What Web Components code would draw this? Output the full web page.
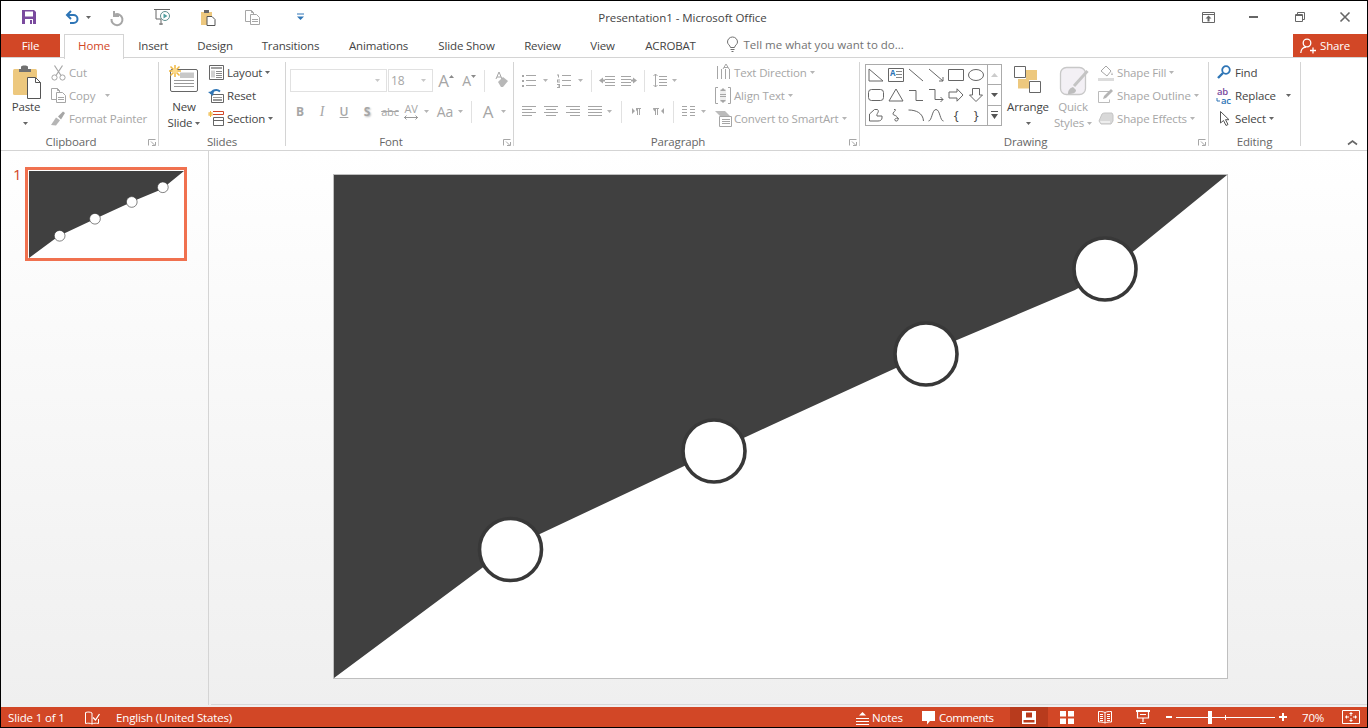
<!DOCTYPE html>
<html lang="en"><head><meta charset="utf-8"><title>Presentation1 - Microsoft Office</title>
<style>
html,body{margin:0;padding:0;background:#000}
body{font:11.5px/16px "Open Sans","Liberation Sans",sans-serif;color:#444}
</style></head>
<body>
<pp-app>
  <pp-titlebar>
    <pp-ico slot="qat" name="save" style="margin-left:20px"></pp-ico>
    <pp-ico slot="qat" name="undo" style="margin-left:27px"></pp-ico>
    <pp-ico slot="qat" name="caret" style="margin-left:7px"></pp-ico>
    <pp-ico slot="qat" name="redo" style="margin-left:19px"></pp-ico>
    <pp-ico slot="qat" name="present" style="margin-left:30px"></pp-ico>
    <pp-ico slot="qat" name="pastesm" style="margin-left:30px"></pp-ico>
    <pp-ico slot="qat" name="copy" style="margin-left:29px"></pp-ico>
    <pp-ico slot="qat" name="qatmore" style="margin-left:37px"></pp-ico>
    <span slot="title">Presentation1 - Microsoft Office</span>
    <pp-ico slot="win" name="ribopt" style="margin-right:34px"></pp-ico>
    <pp-ico slot="win" name="min" style="margin-right:36px"></pp-ico>
    <pp-ico slot="win" name="restore" style="margin-right:35px"></pp-ico>
    <pp-ico slot="win" name="close" style="margin-right:17px"></pp-ico>
  </pp-titlebar>
  <pp-tabs>
    <pp-tab kind="file" style="width:59px">File</pp-tab>
    <pp-tab kind="active" style="width:60px;margin-left:4px">Home</pp-tab>
    <pp-tab style="width:58.5px">Insert</pp-tab>
    <pp-tab style="width:65px">Design</pp-tab>
    <pp-tab style="width:86px">Transitions</pp-tab>
    <pp-tab style="width:90px">Animations</pp-tab>
    <pp-tab style="width:86px">Slide Show</pp-tab>
    <pp-tab style="width:66px">Review</pp-tab>
    <pp-tab style="width:54px">View</pp-tab>
    <pp-tab style="width:82px">ACROBAT</pp-tab>
    <pp-tell><pp-ico slot="icon" name="bulb"></pp-ico>Tell me what you want to do...</pp-tell>
    <pp-share><pp-ico slot="icon" name="share"></pp-ico>Share</pp-share>
  </pp-tabs>
  <pp-ribbon>
    <pp-group label="Clipboard" launcher style="width:158px">
      <pp-large style="width:48px;margin-left:1px">
        <pp-ico slot="icon" name="paste" style="margin-left:3px"></pp-ico>Paste<br><pp-ico name="caret"></pp-ico>
      </pp-large>
      <pp-stack>
        <pp-small disabled><pp-ico slot="icon" name="cut"></pp-ico>Cut</pp-small>
        <pp-small disabled><pp-ico slot="icon" name="copy"></pp-ico>Copy<pp-ico name="caretd" style="margin-left:10px"></pp-ico></pp-small>
        <pp-small disabled><pp-ico slot="icon" name="painter"></pp-ico>Format Painter</pp-small>
      </pp-stack>
    </pp-group>
    <pp-group label="Slides" style="width:127px">
      <pp-large style="width:46px;margin-left:2px">
        <pp-ico slot="icon" name="newslide" style="margin-right:2px"></pp-ico>New<br>Slide<pp-ico name="caret" style="margin-left:3px"></pp-ico>
      </pp-large>
      <pp-stack style="margin-left:1px">
        <pp-small><pp-ico slot="icon" name="layout"></pp-ico>Layout<pp-ico name="caret" style="margin-left:3px"></pp-ico></pp-small>
        <pp-small><pp-ico slot="icon" name="reset"></pp-ico>Reset</pp-small>
        <pp-small><pp-ico slot="icon" name="section"></pp-ico>Section<pp-ico name="caret" style="margin-left:3px"></pp-ico></pp-small>
      </pp-stack>
    </pp-group>
    <pp-group label="Font" launcher style="width:228px">
      <pp-tools>
        <pp-toolrow>
          <pp-field style="width:97px;margin-left:4px"></pp-field>
          <pp-field style="width:45px;margin-left:1px;font-size:12px">18</pp-field>
          <pp-tool style="width:14px;margin-left:6px;font-size:17px">A<pp-ico name="up" style="margin:-8px 0 0 0"></pp-ico></pp-tool>
          <pp-tool style="width:14px;margin-left:9px;font-size:14px">A<pp-ico name="dn" style="margin:-8px 0 0 0"></pp-ico></pp-tool>
          <pp-sep style="margin-left:8px"></pp-sep>
          <pp-ico name="eraser" style="margin-left:9px"></pp-ico>
        </pp-toolrow>
        <pp-toolrow>
          <pp-tool style="width:22px;margin-left:3px;font-weight:700;font-size:12px">B</pp-tool>
          <pp-tool style="width:22px;font-style:italic;font-family:'Liberation Serif',serif;font-size:14px">I</pp-tool>
          <pp-tool style="width:22px;text-decoration:underline;font-weight:600;font-size:12px">U</pp-tool>
          <pp-tool style="width:22px;margin-left:1px;font-weight:700;font-size:12px;text-shadow:1px 1px 2px #bbb">S</pp-tool>
          <pp-tool style="width:22px;margin-left:1px;text-decoration:line-through;font-size:11px">abc</pp-tool>
          <pp-tool av style="width:16px;margin-left:2px;font-size:11px"><pp-ico name="avarrow" style="position:absolute;left:0;bottom:3px"></pp-ico><span style="margin-top:-6px">AV</span></pp-tool>
          <pp-ico name="caretd" style="margin-left:5px"></pp-ico>
          <pp-tool style="width:16px;margin-left:8px;font-size:14px">Aa</pp-tool>
          <pp-ico name="caretd" style="margin-left:5px"></pp-ico>
          <pp-sep style="margin-left:8px"></pp-sep>
          <pp-tool style="width:14px;margin-left:9px;font-size:17px">A</pp-tool>
          <pp-ico name="caretd" style="margin-left:6px"></pp-ico>
        </pp-toolrow>
      </pp-tools>
    </pp-group>
    <pp-group label="Paragraph" launcher style="width:346px">
      <pp-tools style="width:200px">
        <pp-toolrow>
          <pp-ico name="bullets" style="margin-left:8px"></pp-ico>
          <pp-ico name="caretd" style="margin-left:7px"></pp-ico>
          <pp-ico name="numbers" style="margin-left:9px"></pp-ico>
          <pp-ico name="caretd" style="margin-left:7px"></pp-ico>
          <pp-sep style="margin-left:8px"></pp-sep>
          <pp-ico name="outdent" style="margin-left:7px"></pp-ico>
          <pp-ico name="indent" style="margin-left:6px"></pp-ico>
          <pp-sep style="margin-left:7px"></pp-sep>
          <pp-ico name="spacing" style="margin-left:8px"></pp-ico>
          <pp-ico name="caretd" style="margin-left:5px"></pp-ico>
        </pp-toolrow>
        <pp-toolrow>
          <pp-ico name="aleft" style="margin-left:8px"></pp-ico>
          <pp-ico name="acenter" style="margin-left:8px"></pp-ico>
          <pp-ico name="aright" style="margin-left:8px"></pp-ico>
          <pp-ico name="ajust" style="margin-left:8px"></pp-ico>
          <pp-ico name="caretd" style="margin-left:5px"></pp-ico>
          <pp-sep style="margin-left:9px"></pp-sep>
          <pp-ico name="ltr" style="margin-left:10px"></pp-ico>
          <pp-ico name="rtl" style="margin-left:12px"></pp-ico>
          <pp-sep style="margin-left:9px"></pp-sep>
          <pp-ico name="cols" style="margin-left:8px"></pp-ico>
          <pp-ico name="caretd" style="margin-left:6px"></pp-ico>
        </pp-toolrow>
      </pp-tools>
      <pp-stack style="margin-left:1px">
        <pp-small disabled><pp-ico slot="icon" name="textdir"></pp-ico>Text Direction<pp-ico name="caretd" style="margin-left:3px"></pp-ico></pp-small>
        <pp-small disabled><pp-ico slot="icon" name="aligntext"></pp-ico>Align Text<pp-ico name="caretd" style="margin-left:3px"></pp-ico></pp-small>
        <pp-small disabled><pp-ico slot="icon" name="smartart"></pp-ico>Convert to SmartArt<pp-ico name="caretd" style="margin-left:3px"></pp-ico></pp-small>
      </pp-stack>
    </pp-group>
    <pp-group label="Drawing" launcher style="width:349px">
      <pp-gallery style="margin-left:5px">
        <pp-ico name="s1"></pp-ico><pp-ico name="s2"></pp-ico><pp-ico name="s3"></pp-ico><pp-ico name="s4"></pp-ico><pp-ico name="s5"></pp-ico><pp-ico name="s6"></pp-ico>
        <pp-ico name="s7"></pp-ico><pp-ico name="s8"></pp-ico><pp-ico name="s9"></pp-ico><pp-ico name="s10"></pp-ico><pp-ico name="s11"></pp-ico><pp-ico name="s12"></pp-ico>
        <pp-ico name="s13"></pp-ico><pp-ico name="s14"></pp-ico><pp-ico name="s15"></pp-ico><pp-ico name="s16"></pp-ico><span>{</span><span>}</span>
      </pp-gallery>
      <pp-large style="width:48px;margin-left:2px">
        <pp-ico slot="icon" name="arrange" style="margin-top:1px"></pp-ico>Arrange<br><pp-ico name="caret"></pp-ico>
      </pp-large>
      <pp-large disabled style="width:42px">
        <pp-ico slot="icon" name="quick" style="margin:2px 0 0 4px"></pp-ico>Quick<br>Styles<pp-ico name="caretd" style="margin-left:3px"></pp-ico>
      </pp-large>
      <pp-stack style="margin-left:4px">
        <pp-small disabled><pp-ico slot="icon" name="fill"></pp-ico>Shape Fill<pp-ico name="caretd" style="margin-left:3px"></pp-ico></pp-small>
        <pp-small disabled><pp-ico slot="icon" name="outline"></pp-ico>Shape Outline<pp-ico name="caretd" style="margin-left:3px"></pp-ico></pp-small>
        <pp-small disabled><pp-ico slot="icon" name="effects"></pp-ico>Shape Effects<pp-ico name="caretd" style="margin-left:3px"></pp-ico></pp-small>
      </pp-stack>
    </pp-group>
    <pp-group label="Editing" style="width:92px">
      <pp-stack style="margin-left:7px">
        <pp-small><pp-ico slot="icon" name="find"></pp-ico>Find</pp-small>
        <pp-small><pp-ico slot="icon" name="replace"></pp-ico>Replace<pp-ico name="caret" style="margin-left:10px"></pp-ico></pp-small>
        <pp-small><pp-ico slot="icon" name="select"></pp-ico>Select<pp-ico name="caret" style="margin-left:3px"></pp-ico></pp-small>
      </pp-stack>
    </pp-group>
    <pp-ico slot="end" name="chev"></pp-ico>
  </pp-ribbon>
  <pp-main>
    <pp-thumbs slot="pane"><pp-slide thumb></pp-slide></pp-thumbs>
    <pp-slide></pp-slide>
  </pp-main>
  <pp-status>
    <pp-sitem slot="left" style="width:77px;margin-left:7px">Slide 1 of 1</pp-sitem>
    <pp-sitem slot="left" style="width:31px"><pp-ico name="spell"></pp-ico></pp-sitem>
    <pp-sitem slot="left">English (United States)</pp-sitem>
    <pp-sitem style="width:66px"><pp-ico name="notes" style="margin-right:3px"></pp-ico>Notes</pp-sitem>
    <pp-sitem style="width:88px;letter-spacing:-.5px"><pp-ico name="comment" style="margin-right:4px"></pp-ico>Comments</pp-sitem>
    <pp-sitem view active><pp-ico name="vnormal"></pp-ico></pp-sitem>
    <pp-sitem view><pp-ico name="vsorter"></pp-ico></pp-sitem>
    <pp-sitem view><pp-ico name="vread"></pp-ico></pp-sitem>
    <pp-sitem view><pp-ico name="vshow"></pp-ico></pp-sitem>
    <pp-zoomer></pp-zoomer>
    <pp-sitem style="width:40px;margin-left:15px">70%</pp-sitem>
    <pp-ico name="fit" style="margin-right:7px"></pp-ico>
  </pp-status>
</pp-app>
<script>
const G='#a6a6a6',D='#666',B='#2e75b6',T='#edc87e',W='#fff';
const ln=(d,c=G,w=1)=>`<path d="${d}" fill="none" stroke="${c}" stroke-width="${w}"/>`;
const fl=(d,c=G)=>`<path d="${d}" fill="${c}"/>`;
const hl=(x,ys,len,c=G)=>ys.map(y=>`<path d="M${x} ${y}.5h${len}" stroke="${c}"/>`).join('');
const I={
save:[16,16,fl('M1 1h12l2 2v12H1z','#7a4a9e')+fl('M4 2.5h8v5H4zM4 10h8v5H4z',W)+fl('M9 11h2v4H9z','#7a4a9e')],
undo:[15,15,ln('M3 5h6.5a4 4 0 0 1 0 8H6',B,2)+ln('M7 1L3 5l4 4',B,2)],
redo:[14,15,ln('M4 1v5h5',G,2)+ln('M5 4.500A5.500 5.500 0 1 1 1.500 9',G,2)],
caret:[5,3,fl('M0 0h5L2.5 3z',D)],
caretd:[5,3,fl('M0 0h5L2.5 3z','#b5b5b5')],
up:[5,3,fl('M0 3h5L2.5 0z','#8a8a8a')],
dn:[5,3,fl('M0 0h5L2.5 3z','#8a8a8a')],
present:[17,18,ln('M0 1.5h16',D)+ln('M2 2v9h5M9 16H5m2-5v6',D)+`<circle cx="11" cy="8" r="4.5" fill="#fff" stroke="#5e8f8f"/>`+fl('M9.5 5.5l4 2.5-4 2.5z','#4f9f9f')],
pastesm:[15,17,fl('M0 3h11v13H0z',T)+fl('M3 1h5v3H3z',D)+`<path d="M6 7.5h5l3 3v6H6z" fill="#fff" stroke="#555"/>`],
qatmore:[7,8,fl('M0 0.5h7v1H0z',B)+fl('M0 3.5h7L3.5 7z',B)],
copy:[15,15,ln('M.5 .5h6l2 2v9h-8zM6.5 .5v2h2',G)+`<path d="M5.5 4.5h6l3 3v7h-9z" fill="#fff" stroke="${G}"/>`+ln('M7 9.5h6M7 11.5h6',G)],
ribopt:[13,11,ln('M.5 .5h12v10H.5zM.5 2.5h12',D)+fl('M6.5 3.5L9.5 6.5H7.5v3h-2v-3H3.5z',D)],
min:[10,2,fl('M0 0h9v2H0z',D)],
restore:[10,10,ln('M2.5 2.5v-2h7v7h-2M.5 2.5h7v7h-7zM.5 3.5h7',D)],
close:[10,10,ln('M.5 .5l9 9m0-9l-9 9',D,1.6)],
bulb:[11,15,ln('M3.5 10.5C3 8 .5 7.5.5 5a5 5 0 0 1 10 0c0 2.500-2.500 3-3 5.500zM3.500 12.500h4M4.500 14.500h2','#707070')],
share:[16,16,`<circle cx="7" cy="5" r="3.800" fill="none" stroke="#fff" stroke-width="1.300"/>`+ln('M.8 15c0-3.500 2.500-5.800 5.200-6M13 9.500v6M10 12.500h6',W,1.300)],
paste:[29,34,`<rect y="4" width="24" height="26" rx="1.500" fill="${T}"/>`+fl('M8 4V1.500L10 .5h3L15 1.500V4h3v3H6V4z','#707070')+`<path d="M14.500 12.500h8l5 5v16h-13z" fill="#fff" stroke="#555"/>`+ln('M22.500 12.500v5h5','#555')],
cut:[15,16,`<circle cx="3.500" cy="12.500" r="2.600" fill="none" stroke="${G}"/><circle cx="11.500" cy="12.500" r="2.600" fill="none" stroke="${G}"/>`+ln('M5 10.500L11.500 .5M10 10.500L3.500 .5',G,1.200)],
painter:[16,15,fl('M1 14L6 6.500l4 2.800L6 14.500z','#b5b5b5')+fl('M8 5.500l5-5 2 1.500-4 6.500z',G)],
newslide:[30,27,`<rect x="2.500" y="4.500" width="27" height="22" rx="1.500" fill="#fff" stroke="#666"/>`+fl('M12 7.500h14v5.500H12z','#c8c8c8')+hl(6,[15,18,21],20,'#999')+`<g stroke="#f0b840" stroke-width="1.500"><path d="M7 0v12M1 6h12M2.500 1.500l9 9M11.500 1.500l-9 9"/></g><circle cx="7" cy="6" r="2.500" fill="#fbd98c"/>`],
layout:[15,15,`<path d="M.5 .5h14v14H.5z" fill="#fff" stroke="#666"/>`+fl('M2 2h11v2H2z','#a0a0a0')+fl('M2 5.500h4v7H2z','#d0d0d0')+hl(7,[6,8,10,12],6,'#888')],
reset:[16,15,`<path d="M3.500 6.500h12v8h-12z" fill="#fff" stroke="#666"/>`+hl(5,[9,11,12],9,'#999')+ln('M3 6C4 2 9 1 12 3.500',B,2)+fl('M0 4l6-1-1 5z',B)],
section:[16,15,`<path d="M5 .5h10.500v3M5 3.500h10.500" stroke="#d24726" fill="none"/>`+ln('M5.500 6.500h10v8h-10z','#666')+ln('M5.500 9.500h10','#666')+`<path d="M2.500 0v6M0 3h5M.7 1l3.600 4M4.300 1L.7 5" stroke="#f0b840"/>`],
eraser:[15,17,fl('M4 10l5-5 5 4-5 6H7z','#b8b8b8')+`<path d="M2 7 5 0l3 7M3 5h4" stroke="${G}" fill="none"/>`],
avarrow:[16,5,ln('M1 2.500h14M3.500 .5l-2 2 2 2M12.500 .5l2 2-2 2','#999')],
bullets:[14,14,fl('M0 1h2v2H0zM0 6h2v2H0zM0 11h2v2H0z',G)+hl(4,[1,6,11],10)],
numbers:[14,14,fl('M0 .5h2v3H1V1.500H0zM0 5.500h3v1H1v1h2v1H0zM0 10h3v4H0v-1h2v-.5H1v-1h1V11H0z',G)+hl(5,[1,6,11],9)],
outdent:[16,12,hl(6,[1,4,7,10],10)+fl('M0 5.500l4-3v2h2v2H4v2z',G)],
indent:[16,12,hl(0,[1,4],10)+hl(0,[7,10],10)+fl('M16 5.500l-4-3v2h-2v2h2v2z',G)],
spacing:[14,15,ln('M2.500 1v13M.5 3l2-2 2 2M.5 12l2 2 2-2',G)+hl(6,[3,6,9,12],8)],
aleft:[14,11,hl(0,[0,6],14)+hl(0,[3,9],10)],
acenter:[14,11,hl(0,[0,6],14)+hl(2,[3,9],10)],
aright:[14,11,hl(0,[0,6],14)+hl(4,[3,9],10)],
ajust:[14,11,hl(0,[0,3,6,9],14)],
ltr:[9,9,fl('M0 1l3 3-3 3zM4 1h5v1H8v6H7V2H6v6H5V4.500Q3.500 4 4 1z',G)],
rtl:[11,9,fl('M11 1L8 4l3 3zM0 1h6v1H5v6H4V2H3v6H2V4.500Q0 4 0 1z',G)],
cols:[13,11,hl(0,[0,3,6,9],5)+hl(8,[0,3,6,9],5)],
textdir:[15,17,ln('M1.500 2v13M5.500 5v10M9.500 5v10M13.500 5v10',G)+`<path d="M7 5 10 0l3 5M8 3.500h4" fill="none" stroke="${G}"/>`],
aligntext:[16,17,ln('M3 .5H.5v16H3M13 .5h2.500v16H13',G)+fl('M5 2h6v13H5z','#eee')+fl('M8 1l3 3H5zM8 16l-3-3h6z',G)+hl(5,[7,9],6)],
smartart:[17,16,fl('M0 0h10l5 5H5z','#bbb')+`<path d="M4.500 5.500h12v10h-12z" fill="#fff" stroke="${G}"/>`+hl(7,[8,10,12],8)],
arrange:[28,28,ln('M.5 .5h11v11H.5z','#666')+fl('M12 4h11v10H12z',T)+fl('M4 13h11v9.500H4z',T)+`<path d="M15.500 15.500h11v11h-11z" fill="#fff" stroke="#666"/>`],
quick:[30,29,`<rect x=".5" y=".5" width="25" height="27" rx="6" fill="#f3f0f5" stroke="#c8c8c8" stroke-width="1.300"/>`+ln('M14 19L27.500 4','#c4c4c4',3)+fl('M8 27c0-4 2-6 5-7l3 3c0 3-3 4-8 4z','#bdbdbd')],
fill:[16,16,fl('M0 13h16v3H0z','#dcdcdc')+`<path d="M3 6l5-5 5 5-4 5z" fill="#fff" stroke="${G}"/>`+fl('M14 7l1 3h-2z','#bbb')],
outline:[16,16,ln('M11 3.500H.5v11h11v-3','#bbb')+fl('M5 11l1-3 7-7 2 2-7 7z','#b5b5b5')],
effects:[16,14,`<path d="M1 9l3-7q1-1 3-1h7l1 2v6l-2 3H3z" fill="#d8d8d8" stroke="#c4c4c4"/>`+fl('M2 9h10v2H3z','#eee')],
find:[14,15,`<circle cx="9" cy="5" r="3.800" fill="#fff" stroke="${B}" stroke-width="1.800"/>`+ln('M6 8l-5 5',B,2.400)],
replace:[16,16,`<text x="1" y="7" font-family="Open Sans,sans-serif" font-size="9.500" font-weight="600" fill="#7a4a9e">ab</text><text x="5" y="15.500" font-family="Open Sans,sans-serif" font-size="9.500" font-weight="600" fill="${B}">ac</text>`+ln('M1 10v3h3',B)],
select:[11,15,`<path d="M1.500 .5v11.500l3-2.500 2.500 5 2-1-2.500-4.800h3.500z" fill="#fff" stroke="#555"/>`],
chev:[11,5,ln('M1 4.500l4.500-3.500 4.500 3.500',D,1.600)],
spell:[15,15,ln('M7 2C5 .8 3 .8 .5 1.500v11C3 12 5 12 7 13c2-1 4-1 6.500-.5V8M7 2v11',W)+ln('M8 6.500l2.500 2.500 4-6',W,1.300)],
notes:[13,13,fl('M6.500 0l3.500 3.500H3z',W)+hl(0,[6,9,12],13,W)],
comment:[13,14,fl('M0 0h13v10H8l-3 3.500V10H0z',W)],
vnormal:[14,13,fl('M0 0h14v13H0zM4 1.500v5h6v-5zM1.500 9v2.500h11V9z',W)+'',' evenodd'],
vsorter:[14,13,fl('M0 0h6v5.500H0zM8 0h6v5.500H8zM0 7.500h6V13H0zM8 7.500h6V13H8z',W)],
vread:[14,13,ln('M7 1.500C5 .5 3 .5.5.5v10.500c2.500 0 4.500 0 6.500 1 2-1 4-1 6.500-1V.5C11 .5 9 .5 7 1.500zM7 1.500V12',W)+hl(2,[3,5,7,9],3,W)+hl(9,[3,5,7,9],3,W)],
vshow:[14,14,fl('M0 0h14v2H0z',W)+ln('M1.500 2v6h11V2M7 8v4M4 13.500h6',W,1.200)+hl(4,[4],6,W)],
fit:[18,14,ln('M.5 .5h17v13H.5z',W)+fl('M9 2l2 2H7zM9 12l-2-2h4zM3 7l2-2v4zM15 7l-2 2V5z',W)+ln('M9 4v2M9 8v2M5 7h2M11 7h2',W)],
s1:[16,14,ln('M1 1v12h14z',D)],
s2:[16,14,`<path d="M.5 .5h15v13H.5z" fill="none" stroke="#666"/><text x="2" y="8" font-size="8" font-weight="700" font-family="Open Sans,sans-serif" fill="${B}">A</text>`+hl(8,[3,6,9],6,'#888')],
s3:[16,14,ln('M1 1l14 12',D)],
s4:[16,14,ln('M1 1l14 12M11 13h4V9',D)],
s5:[16,14,ln('M.5 1.500h15v11H.5z',D)],
s6:[16,14,`<ellipse cx="8" cy="7" rx="7.500" ry="5.500" fill="none" stroke="#666"/>`],
s7:[16,14,`<rect x=".5" y="1.500" width="15" height="11" rx="3" fill="none" stroke="#666"/>`],
s8:[16,14,ln('M8 1l7 12H1z',D)],
s9:[16,14,ln('M1 2.500h7v10h7',D)],
s10:[16,14,ln('M1 1.500h6v10h8M12.500 9l2.500 2.500L12.500 14',D)],
s11:[16,14,ln('M1 4h8V.8L15 7l-6 6.200V10H1z',D)],
s12:[16,14,ln('M4.500 .5h7V7h3L8 13.500 1.500 7h3z',D)],
s13:[16,14,ln('M1.500 13V6L6.500 1.500h3C12 4 8 5.500 9 8h5v2c0 2-2 3-4 3z',D)],
s14:[16,14,ln('M6 1.500C11 1 2 5.500 6 7c5 1.500 5 6.500 2 6C4.500 12 9 8.500 11 11',D)],
s15:[16,14,ln('M.5 2C8 2 15 5 15.500 13',D)],
s16:[16,14,ln('M.5 13C4 13 4 1.500 8 1.500S12 13 15.500 13',D)],
};
function def(name,html,extra){
  const t=document.createElement('template');t.innerHTML=html;
  customElements.define(name,class extends HTMLElement{
    constructor(){super();this.attachShadow({mode:'open'}).appendChild(t.content.cloneNode(true));}
    connectedCallback(){if(extra)extra(this);}
  });
}
def('pp-ico','<style>:host{display:inline-flex;flex:none;vertical-align:middle;line-height:0}svg{display:block;overflow:visible}</style><svg></svg>',el=>{
  const d=I[el.getAttribute('name')]||[1,1,''];const s=el.shadowRoot.querySelector('svg');
  s.setAttribute('width',d[0]);s.setAttribute('height',d[1]);s.setAttribute('viewBox',`0 0 ${d[0]} ${d[1]}`);s.innerHTML=d[2];
  if(d[3])s.querySelectorAll('path').forEach(p=>p.setAttribute('fill-rule','evenodd'));
});
def('pp-app','<style>:host{display:flex;flex-direction:column;width:1366px;height:726px;margin:1px;background:#fff;overflow:hidden;letter-spacing:-.15px}</style><slot></slot>');
def('pp-titlebar',`<style>:host{display:grid;grid-template-columns:1fr auto 1fr;height:32px;align-items:center}
.l,.r{display:flex;align-items:center}.r{justify-content:flex-end}.c{margin-right:3px;padding-top:2px;letter-spacing:-.05px}</style>
<div class="l"><slot name="qat"></slot></div><div class="c"><slot name="title"></slot></div><div class="r"><slot name="win"></slot></div>`);
def('pp-tabs','<style>:host{display:flex;height:25px;box-sizing:border-box;border-bottom:1px solid #d4d4d4;position:relative;z-index:1}</style><slot></slot>');
def('pp-tab',`<style>:host{display:flex;align-items:center;justify-content:center;flex:none;box-sizing:border-box;margin-top:1px;height:24px;padding-bottom:1px;color:#444}
:host([kind=file]){background:#d24726;color:#fff;height:23px;padding-bottom:0}
:host([kind=active]){background:#fff;color:#d24726;border:1px solid #d4d4d4;border-bottom:0;height:25px;padding-bottom:2px}</style><slot></slot>`);
def('pp-tell','<style>:host{display:flex;align-items:center;color:#737373;margin-left:15px;padding-bottom:1px;letter-spacing:0}.i{display:flex;margin-right:6px}</style><span class="i"><slot name="icon"></slot></span><slot></slot>');
def('pp-share','<style>:host{display:flex;align-items:center;margin-left:auto;width:74px;height:23px;margin-top:1px;background:#d24726;color:#fff;box-sizing:border-box;padding:1px 0 0 7px}.i{display:flex;margin-right:4px}</style><span class="i"><slot name="icon"></slot></span><slot></slot>');
def('pp-ribbon','<style>:host{display:flex;height:93px;box-sizing:border-box;border-bottom:1px solid #d4d4d4}.e{flex:1;display:flex;justify-content:flex-end;align-items:flex-end;padding:0 9px 5px 0}</style><slot></slot><div class="e"><slot name="end"></slot></div>');
def('pp-group',`<style>:host{display:flex;flex-direction:column;flex:none;box-sizing:border-box;padding-top:4px;height:92px;position:relative}
:host::after{content:"";position:absolute;right:0;top:4px;bottom:4px;width:1px;background:#d4d4d4}
.c{display:flex;height:69px;flex:none}.f{display:flex;height:19px;box-sizing:border-box;padding-top:3px;color:#666}.l{flex:1;text-align:center;margin-right:1px}
.k{display:none;width:17px;align-items:flex-start;padding:5px 0 0 6px;box-sizing:border-box}
:host([launcher]) .k{display:flex}</style>
<div class="c"><slot></slot></div><div class="f"><div class="l"></div><div class="k"><svg width="8" height="7" viewBox="0 0 8 7"><path d="M.5 6.500V.5h7M3 2.500l3.500 3.500M4 6.500h3.500V3" fill="none" stroke="#a6a6a6"/></svg></div></div>`,
el=>{el.shadowRoot.querySelector('.l').textContent=el.getAttribute('label');});
def('pp-large',`<style>:host{display:flex;flex-direction:column;align-items:center;flex:none;text-align:center;height:69px;line-height:16px;white-space:nowrap}
:host([disabled]){color:#a6a6a6}.i{height:37px;padding-top:3px;box-sizing:border-box;display:flex;justify-content:center}</style>
<div class="i"><slot name="icon"></slot></div><div><slot></slot></div>`);
def('pp-stack','<style>:host{display:flex;flex-direction:column;flex:none}</style><slot></slot>');
def('pp-small',`<style>:host{display:flex;align-items:center;height:23px;box-sizing:border-box;padding-bottom:2px;white-space:nowrap;color:#444}:host([disabled]){color:#a6a6a6}
.i{display:flex;justify-content:center;width:16px;margin-right:3px;flex:none}</style><span class="i"><slot name="icon"></slot></span><slot></slot>`);
def('pp-tools','<style>:host{display:flex;flex-direction:column;gap:8px;padding-top:7px;flex:none}</style><slot></slot>');
def('pp-toolrow','<style>:host{display:flex;align-items:center;height:23px;color:#a6a6a6}</style><slot></slot>');
def('pp-field','<style>:host{display:flex;align-items:center;box-sizing:border-box;height:23px;border:1px solid #e1e1e1;padding-left:2px;flex:none;color:#a6a6a6;position:relative}svg{position:absolute;right:6px;top:9px}</style><slot></slot><svg width="5" height="3"><path d="M0 0h5L2.500 3z" fill="#c8c8c8"/></svg>');
def('pp-tool','<style>:host{display:inline-flex;align-items:center;justify-content:center;flex:none;height:23px;color:#a6a6a6;position:relative}</style><slot></slot>');
def('pp-sep','<style>:host{display:block;width:1px;height:22px;background:#e1e1e1;flex:none}</style>');
def('pp-gallery',`<style>:host{display:flex;flex:none;box-sizing:border-box;width:137px;height:62px;margin-top:2px;border:1px solid #ababab}
.g{display:grid;grid-template-columns:repeat(6,20px);grid-auto-rows:20px;width:121px;flex:none;place-items:center;color:#555}
.s{display:flex;flex-direction:column;flex:1;border-left:1px solid #ababab}.s div{flex:1;display:flex;align-items:center;justify-content:center}.s div+div{border-top:1px solid #ababab}
::slotted(span){font-size:13px;font-weight:400;color:#444}</style>
<div class="g"><slot></slot></div><div class="s"><div><svg width="7" height="4"><path d="M0 4h7L3.500 0z" fill="#ccc"/></svg></div><div><svg width="7" height="4"><path d="M0 0h7L3.500 4z" fill="#555"/></svg></div><div><svg width="7" height="8"><path d="M0 0h7v1H0zM0 3h7L3.500 8z" fill="#555"/></svg></div></div>`);
def('pp-main',`<style>:host{display:flex;height:556px;padding-bottom:2px;box-sizing:border-box;background:linear-gradient(#fff,#efefef)}
.p{width:208px;flex:none;box-sizing:border-box;border-right:1px solid #d4d4d4}
.c{flex:1;margin-left:2px;padding:23px 0 0 122px;border-bottom:1px solid #d8d8d8}</style><div class="p"><slot name="pane"></slot></div><div class="c"><slot></slot></div>`);
def('pp-thumbs',`<style>:host{display:flex;padding:16px 0 0 12px;color:#d24726;font-size:15px}.n{width:12px;line-height:14px}
.b{width:162px;height:94px;box-sizing:border-box;border:3px solid #f0714f;padding:1px 0 0 1px;background:#fff}</style><div class="n">1</div><div class="b"><slot></slot></div>`);
def('pp-slide',`<style>:host{display:block;width:895px;height:505px;box-sizing:border-box;border:1px solid #bfbfbf;background:#fff}
:host([thumb]){width:155px;height:87px;border:0}svg{display:block;width:100%;height:100%}</style>
<svg viewBox="0 0 893 503" preserveAspectRatio="none">
<path fill="#404040" d="M0 0H893L801 75Q775 96 741 115L623 165L466 237Q420 258 346 293L208 358Q175 372 148 393L0 503Z"/>
<g fill="#fff" stroke="#383838" stroke-width="3.600"><circle cx="176.500" cy="374.500" r="31"/><circle cx="380" cy="276" r="31"/><circle cx="592" cy="179" r="31"/><circle cx="771" cy="94" r="31"/></g></svg>`);
def('pp-status','<style>:host{display:flex;align-items:center;height:20px;background:#d24726;color:#fff;flex:none}.l{display:flex;align-items:center;margin-right:auto}</style><div class="l"><slot name="left"></slot></div><slot></slot>');
def('pp-sitem',`<style>:host{display:flex;align-items:center;height:20px;box-sizing:border-box;flex:none;white-space:nowrap}
:host(:not([view])){padding-top:2px}
:host([view]){width:38px;justify-content:center}:host([active]){background:#b83b1d}</style><slot></slot>`);
def('pp-zoomer',`<style>:host{display:flex;align-items:center;flex:none;margin-left:4px;height:20px;position:relative}
.m,.p{background:#fff;height:2px}.m{width:6px}.p{width:8px;position:relative}.p::after{content:"";position:absolute;left:3px;top:-3px;width:2px;height:8px;background:#fff}
.t{width:99px;height:1px;background:#fff;margin:0 4px;position:relative}
.h{position:absolute;left:32px;top:-6px;width:4px;height:13px;background:#fff}.k{position:absolute;left:49px;top:-2px;width:1px;height:5px;background:#fff}</style>
<div class="m"></div><div class="t"><div class="h"></div><div class="k"></div></div><div class="p"></div>`);
</script>
</body></html>
